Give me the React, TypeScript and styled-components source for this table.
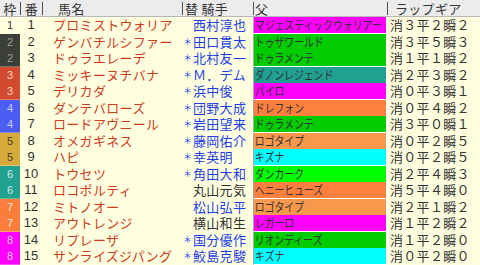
import React from "react";
import styled, { createGlobalStyle } from "styled-components";

const GlobalStyle = createGlobalStyle`
  html, body {
    margin: 0;
    padding: 0;
    background: #ffffe0;
  }
  body {
    font-family: "Noto Sans CJK JP", "Noto Sans", sans-serif;
  }
`;

const Table = styled.div`
  width: 480px;
  height: 265px;
  overflow: hidden;
  background: #ffffe0;
  color: #333;
`;

const HeaderRow = styled.div`
  display: grid;
  grid-template-columns: 20px 22px 140px 71px 134px 93px;
  align-items: center;
  height: 16px;
  border-bottom: 1px solid #b8b8b8;
  background: #ececec;
  font-size: 13px;
`;

const HeaderCell = styled.div<{ $pad?: number; $center?: boolean }>`
  height: 13px;
  line-height: 13px;
  padding-left: ${(p) => p.$pad ?? 0}px;
  text-align: ${(p) => (p.$center ? "center" : "left")};
  border-left: 1px solid #505050;
  white-space: nowrap;
  letter-spacing: 0.3px;

  &:first-child {
    border-left: none;
  }
`;

const Row = styled.div`
  display: grid;
  grid-template-columns: 20px 22px 131px 20px 60px 134px 93px;
  height: 16.5px;
  font-size: 13px;
  line-height: 16px;
`;

const Waku = styled.div<{ $bg: string; $fg: string }>`
  background: ${(p) => p.$bg};
  color: ${(p) => p.$fg};
  font-family: "Liberation Sans", sans-serif;
  font-size: 11px;
  text-align: center;
  border-bottom: 1px solid rgba(255, 255, 224, 0.3);
`;

const Num = styled.div`
  font-family: "Liberation Sans", sans-serif;
  font-size: 13px;
  text-align: center;
  color: #333;
  white-space: nowrap;
`;

const Horse = styled.div`
  color: #cc3b1c;
  padding-left: 11px;
  overflow-x: clip;
  white-space: nowrap;
  letter-spacing: 0.3px;
`;

const Change = styled.div`
  color: #1e3ee6;
  font-size: 9px;
  text-align: right;
  padding-right: 1px;
`;

const Jockey = styled.div<{ $color: string }>`
  color: ${(p) => p.$color};
  white-space: nowrap;
  letter-spacing: 0.3px;
`;

const Sire = styled.div<{ $bg: string }>`
  background: ${(p) => p.$bg};
  border-left: 1px solid #a8a8a8;
  border-right: 1px solid #ffffff;
  border-bottom: 1px solid #ffffff;
  font-size: 12px;
  line-height: 15px;
  color: #333;
`;

const SireName = styled.span`
  display: inline-block;
  transform: scaleX(0.82);
  transform-origin: left center;
  white-space: nowrap;
  padding-left: 1px;
`;

const Gear = styled.div`
  padding-left: 3px;
  letter-spacing: 0.3px;
  white-space: nowrap;
  color: #333;
`;

const WAKU: Record<number, { bg: string; fg: string }> = {
  1: { bg: "transparent", fg: "#333" },
  2: { bg: "#3c3f38", fg: "#9a9a9a" },
  3: { bg: "#d24a30", fg: "#ffd8b0" },
  4: { bg: "#4c5cf2", fg: "#c8ccff" },
  5: { bg: "#d6aa3a", fg: "#4a4030" },
  6: { bg: "#22a090", fg: "#d0f0ea" },
  7: { bg: "#fb7d3c", fg: "#ffe4d0" },
  8: { bg: "#ff00ff", fg: "#ffd0ff" },
};

const C = {
  magenta: "#ff00ff",
  green: "#00cc00",
  lime: "#00ff00",
  teal: "#20a090",
  orange: "#ff7f3f",
  peach: "#f8984c",
  cyan: "#00ffff",
};

type Runner = {
  waku: number;
  no: number;
  horse: string;
  change: boolean;
  jockey: string;
  black?: boolean;
  sire: string;
  sireBg: string;
  gear: string;
};

const runners: Runner[] = [
  { waku: 1, no: 1, horse: "プロミストウォリアー", change: false, jockey: "西村淳也", sire: "マジェスティックウォリアー", sireBg: C.magenta, gear: "消３平２瞬２" },
  { waku: 2, no: 2, horse: "ゲンバチルシファー", change: true, jockey: "田口貫太", sire: "トゥザワールド", sireBg: C.green, gear: "消３平５瞬３" },
  { waku: 2, no: 3, horse: "ドゥラエレーデ", change: true, jockey: "北村友一", sire: "ドゥラメンテ", sireBg: C.green, gear: "消１平１瞬２" },
  { waku: 3, no: 4, horse: "ミッキーヌチバナ", change: true, jockey: "Ｍ．デム", sire: "ダノンレジェンド", sireBg: C.teal, gear: "消２平３瞬２" },
  { waku: 3, no: 5, horse: "デリカダ", change: true, jockey: "浜中俊", sire: "パイロ", sireBg: C.magenta, gear: "消０平３瞬１" },
  { waku: 4, no: 6, horse: "ダンテバローズ", change: true, jockey: "団野大成", sire: "ドレフォン", sireBg: C.orange, gear: "消０平４瞬２" },
  { waku: 4, no: 7, horse: "ロードアヴニール", change: true, jockey: "岩田望来", sire: "ドゥラメンテ", sireBg: C.green, gear: "消３平０瞬１" },
  { waku: 5, no: 8, horse: "オメガギネス", change: true, jockey: "藤岡佑介", sire: "ロゴタイプ", sireBg: C.peach, gear: "消０平２瞬５" },
  { waku: 5, no: 9, horse: "ハピ", change: true, jockey: "幸英明", sire: "キズナ", sireBg: C.cyan, gear: "消０平２瞬５" },
  { waku: 6, no: 10, horse: "トウセツ", change: true, jockey: "角田大和", sire: "ダンカーク", sireBg: C.lime, gear: "消２平４瞬３" },
  { waku: 6, no: 11, horse: "ロコポルティ", change: false, jockey: "丸山元気", black: true, sire: "ヘニーヒューズ", sireBg: C.orange, gear: "消５平４瞬０" },
  { waku: 7, no: 12, horse: "ミトノオー", change: false, jockey: "松山弘平", sire: "ロゴタイプ", sireBg: C.peach, gear: "消２平１瞬２" },
  { waku: 7, no: 13, horse: "アウトレンジ", change: false, jockey: "横山和生", black: true, sire: "レガーロ", sireBg: C.magenta, gear: "消１平２瞬２" },
  { waku: 8, no: 14, horse: "リプレーザ", change: true, jockey: "国分優作", sire: "リオンディーズ", sireBg: C.green, gear: "消１平２瞬０" },
  { waku: 8, no: 15, horse: "サンライズジパング", change: true, jockey: "鮫島克駿", sire: "キズナ", sireBg: C.cyan, gear: "消０平２瞬０" },
];

const App = (): JSX.Element => {
  return (
    <Table>
      <GlobalStyle />
      <HeaderRow>
        <HeaderCell $center>枠</HeaderCell>
        <HeaderCell $center>番</HeaderCell>
        <HeaderCell $pad={15}>馬名</HeaderCell>
        <HeaderCell $pad={2}>替 騎手</HeaderCell>
        <HeaderCell $pad={1}>父</HeaderCell>
        <HeaderCell $pad={7}>ラップギア</HeaderCell>
      </HeaderRow>

      {runners.map((r) => (
        <Row key={r.no}>
          <Waku $bg={WAKU[r.waku].bg} $fg={WAKU[r.waku].fg}>
            {r.waku}
          </Waku>
          <Num>{r.no}</Num>
          <Horse>{r.horse}</Horse>
          <Change>{r.change ? "＊" : ""}</Change>
          <Jockey $color={r.black ? "#333333" : "#1e3ee6"}>{r.jockey}</Jockey>
          <Sire $bg={r.sireBg}>
            <SireName>{r.sire}</SireName>
          </Sire>
          <Gear>{r.gear}</Gear>
        </Row>
      ))}
    </Table>
  );
};

export default App;
